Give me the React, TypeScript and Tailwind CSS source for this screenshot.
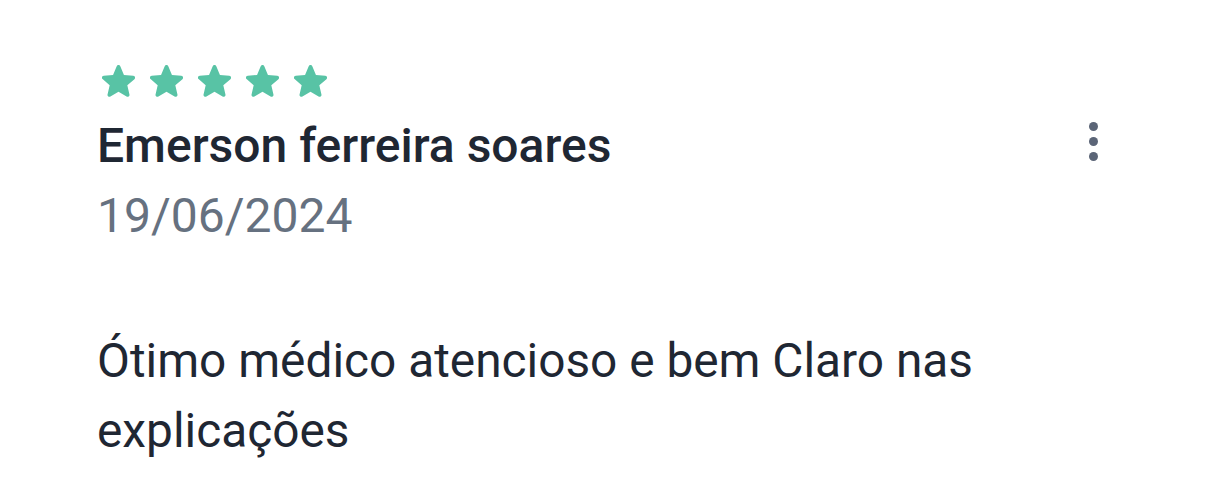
import React from 'react';

const Star: React.FC = () => (
  <svg viewBox="3.5 3 17 17" className="w-[33px] h-[33px]" fill="#58c3a5">
    <path d="M12 17.27l4.15 2.51c.76.46 1.69-.22 1.49-1.08l-1.1-4.72 3.67-3.18c.67-.58.31-1.68-.57-1.75l-4.83-.41-1.89-4.46c-.34-.81-1.5-.81-1.84 0L9.19 8.63l-4.83.41c-.88.07-1.24 1.17-.57 1.75l3.67 3.18-1.1 4.72c-.2.86.73 1.54 1.49 1.08L12 17.27z" />
  </svg>
);

export default function App() {
  return (
    <div className="w-[1220px] h-[498px] bg-white overflow-hidden" style={{ fontFamily: 'Roboto, "Liberation Sans", sans-serif' }}>
      <div className="flex pl-[97px] pr-[122px] pt-[64px]">
        <div className="flex-1">
          <div className="flex gap-[15px] pl-[5px] h-[32px] items-center">
            <Star />
            <Star />
            <Star />
            <Star />
            <Star />
          </div>
          <div className="mt-[15px] text-[48px] leading-[70px] font-medium text-[#1f2733]">
            Emerson ferreira soares
          </div>
          <div className="text-[48px] leading-[70px] text-[#667180]">19/06/2024</div>
          <p className="mt-[75px] text-[47.8px] leading-[70px] text-[#1f2733] max-w-[920px]">
            Ótimo médico atencioso e bem Claro nas explicações
          </p>
        </div>
        <div className="flex flex-col gap-[6px] pt-[58px] items-center w-[9px]">
          <span className="w-[9px] h-[9px] rounded-full bg-[#5b6577]" />
          <span className="w-[9px] h-[9px] rounded-full bg-[#5b6577]" />
          <span className="w-[9px] h-[9px] rounded-full bg-[#5b6577]" />
        </div>
      </div>
    </div>
  );
}
